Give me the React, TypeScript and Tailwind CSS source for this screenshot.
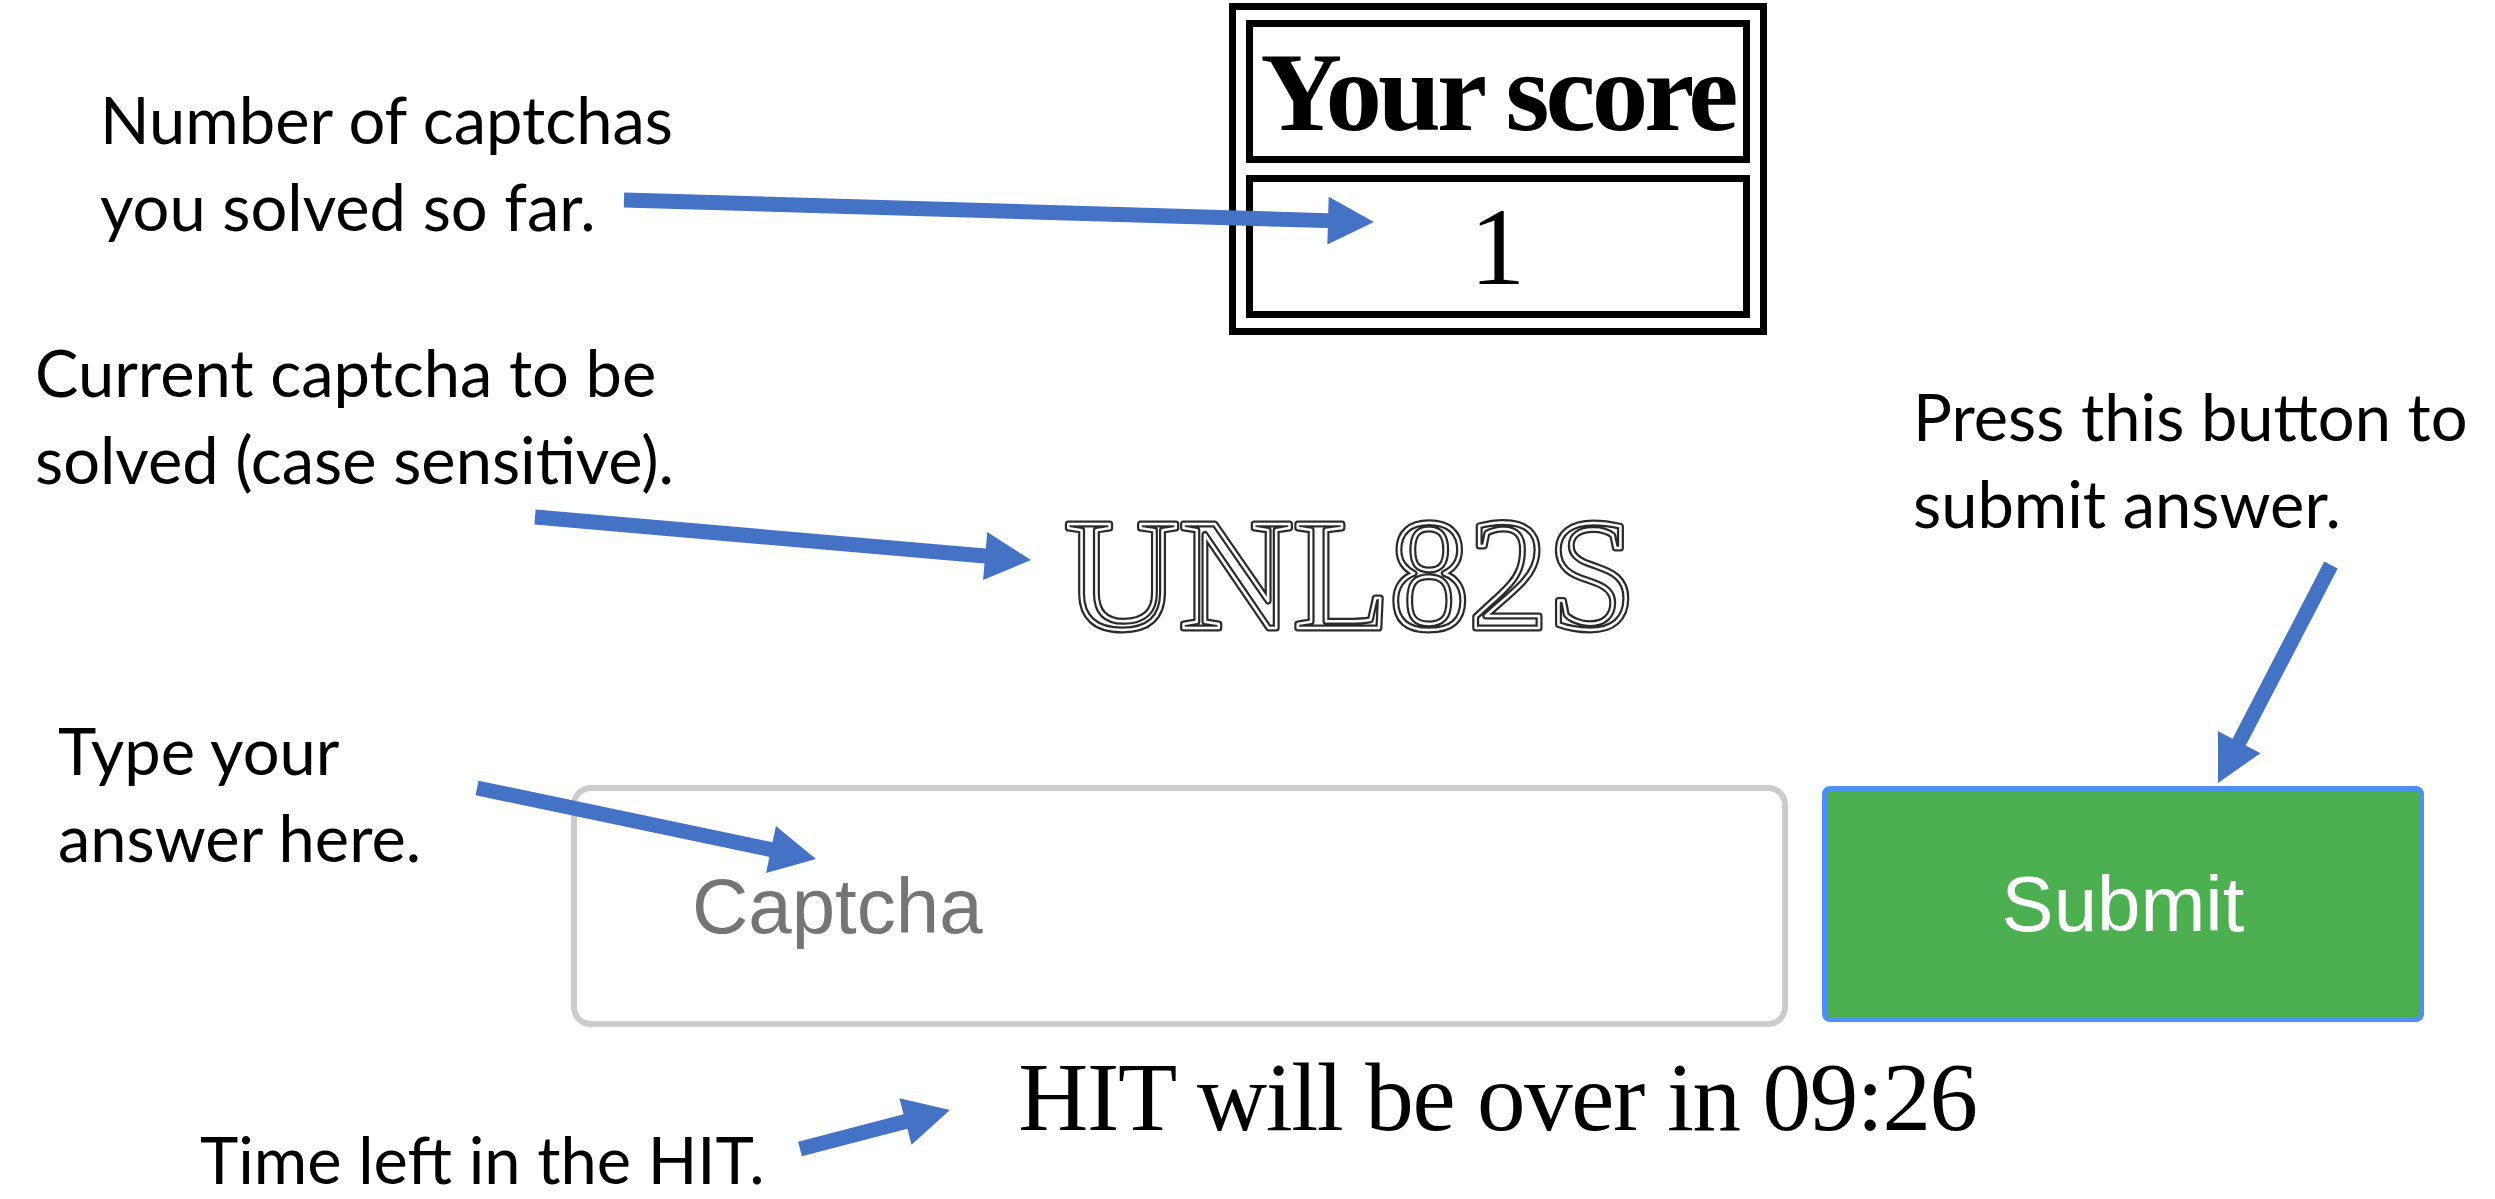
import React from "react"

type Arrow = { x1: number; y1: number; x2: number; y2: number }

// annotation arrows, tail -> tip, in page pixels
const arrows: Arrow[] = [
  { x1: 624, y1: 200, x2: 1374, y2: 222 },
  { x1: 535, y1: 517, x2: 1031, y2: 560 },
  { x1: 2331, y1: 565, x2: 2218, y2: 783 },
  { x1: 477, y1: 788, x2: 816, y2: 859 },
  { x1: 800, y1: 1149, x2: 950, y2: 1110 },
]

function arrowPoints({ x1, y1, x2, y2 }: Arrow, shaft = 15, headLen = 46, headHalf = 24) {
  const dx = x2 - x1
  const dy = y2 - y1
  const len = Math.hypot(dx, dy)
  const ux = dx / len
  const uy = dy / len
  const nx = -uy
  const ny = ux
  const bx = x2 - ux * headLen
  const by = y2 - uy * headLen
  const s = shaft / 2
  const pts = [
    [x1 + nx * s, y1 + ny * s],
    [bx + nx * s, by + ny * s],
    [bx + nx * headHalf, by + ny * headHalf],
    [x2, y2],
    [bx - nx * headHalf, by - ny * headHalf],
    [bx - nx * s, by - ny * s],
    [x1 - nx * s, y1 - ny * s],
  ]
  return pts.map((p) => p.map((v) => v.toFixed(1)).join(",")).join(" ")
}

const labelFont = { fontFamily: "Lato, 'Liberation Sans', sans-serif" }

const Label = ({ lines, className }: { lines: string[]; className: string }) => (
  <div className={`absolute text-[65px] text-black whitespace-nowrap ${className}`} style={labelFont}>
    {lines.map((l) => (
      <div key={l}>{l}</div>
    ))}
  </div>
)

export default function App() {
  return (
    <div className="relative w-[2495px] h-[1199px] overflow-hidden bg-white">
      {/* the form itself */}
      <div className="ml-[571px] w-[1853px] pt-[3px] flex flex-col items-center">
        {/* score table */}
        <div className="w-[538px] border-[7px] border-black p-[10px] flex flex-col gap-[12px] font-['Liberation_Serif',serif]">
          <div className="h-[143px] border-[7px] border-black flex items-center justify-center">
            <span className="text-[113px] leading-none font-bold tracking-[-0.035em]">Your score</span>
          </div>
          <div className="h-[143px] border-[7px] border-black flex items-center justify-center">
            <span className="text-[111px] leading-none">1</span>
          </div>
        </div>

        {/* captcha picture */}
        <svg width="870" height="180" viewBox="0 0 870 180" className="mt-[150px] block">
          <g fontFamily="'Liberation Serif', serif" fontSize="158">
            <text x="2" y="143" fill="#fff" stroke="#2a2a2a" strokeWidth="7" strokeLinejoin="round">
              UNL82S
            </text>
            <text x="2" y="143" fill="none" stroke="#fff" strokeWidth="2.5" strokeLinejoin="round" aria-hidden="true">
              UNL82S
            </text>
          </g>
        </svg>

        {/* answer row */}
        <div className="mt-[120px] flex items-start gap-[34px] font-['Liberation_Sans',Arial,sans-serif]">
          <input
            type="text"
            placeholder="Captcha"
            className="w-[1217px] h-[242px] border-[6px] border-[#cccccc] rounded-[20px] pl-[115px] text-[78px] text-black placeholder:text-[#757575] outline-none bg-white"
          />
          <button className="mt-px w-[602px] h-[236px] bg-[#4caf50] border-[5px] border-[#4d8ff7] rounded-[8px] text-white text-[78px] leading-none">
            Submit
          </button>
        </div>

        {/* timer */}
        <div className="mt-[22px] text-[97px] leading-none tracking-[-0.014em] text-black font-['Liberation_Serif',serif]">
          HIT will be over in 09:26
        </div>
      </div>

      {/* annotations */}
      <Label lines={["Number of captchas", "you solved so far."]} className="left-[100px] top-[76px] leading-[87px]" />
      <Label lines={["Current captcha to be", "solved (case sensitive)."]} className="left-[35px] top-[329px] leading-[87px]" />
      <Label lines={["Press this button to", "submit answer."]} className="left-[1913px] top-[373px] leading-[87px]" />
      <Label lines={["Type your", "answer here."]} className="left-[58px] top-[707px] leading-[87px]" />
      <Label lines={["Time left in the HIT."]} className="left-[200px] top-[1126px] leading-[66px]" />

      <svg className="absolute inset-0 pointer-events-none" width="2495" height="1199">
        {arrows.map((a, i) => (
          <polygon key={i} points={arrowPoints(a)} fill="#4472c4" />
        ))}
      </svg>
    </div>
  )
}
